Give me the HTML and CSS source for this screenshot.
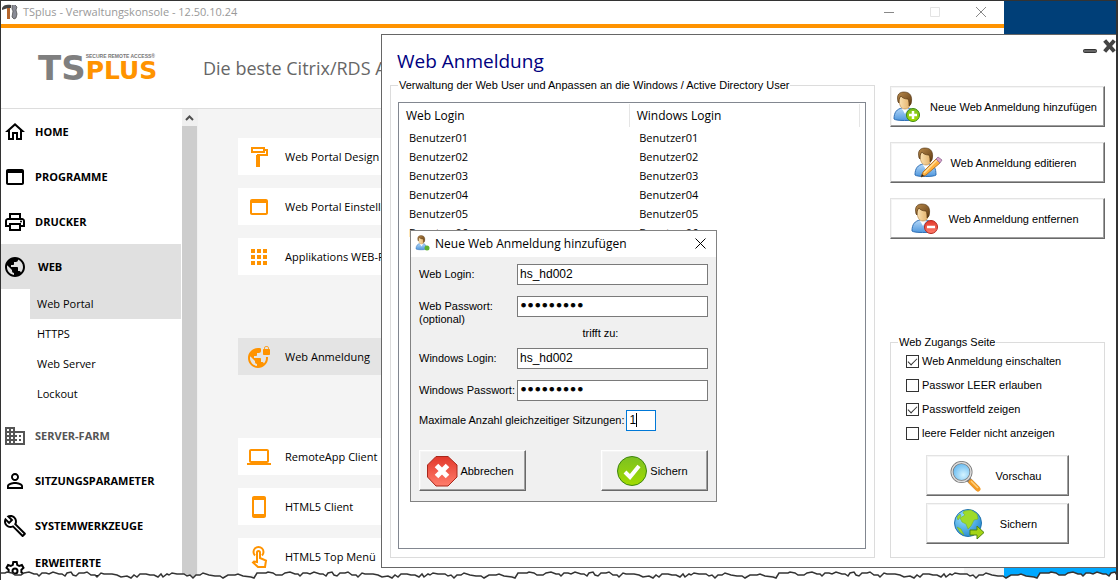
FILE: index.html
```html
<!DOCTYPE html>
<html lang="de">
<head>
    <meta charset="UTF-8">
    <meta name="viewport" content="width=device-width, initial-scale=1.0">
    <title>TSplus - Verwaltungskonsole</title>
    <link rel="stylesheet" href="styles.css">
</head>
<body>
    <!-- shared icon parts -->
    <svg class="defs" width="0" height="0">
        <defs>
            <linearGradient id="hair" x1="0" y1="0" x2="1" y2="1">
                <stop offset="0" stop-color="#b98a4b"/>
                <stop offset="1" stop-color="#5f3a12"/>
            </linearGradient>
            <linearGradient id="face" x1="0" y1="0" x2="1" y2="0">
                <stop offset="0" stop-color="#fbe3b5"/>
                <stop offset="1" stop-color="#e0ac62"/>
            </linearGradient>
            <linearGradient id="shirt" x1="0" y1="0" x2="0" y2="1">
                <stop offset="0" stop-color="#b5d8f8"/>
                <stop offset="1" stop-color="#4f97dd"/>
            </linearGradient>
            <linearGradient id="green" x1="0" y1="0" x2="0" y2="1">
                <stop offset="0" stop-color="#7cc022"/>
                <stop offset="1" stop-color="#a2dc00"/>
            </linearGradient>
            <linearGradient id="red" x1="0" y1="0" x2="0" y2="1">
                <stop offset="0" stop-color="#e2382b"/>
                <stop offset="1" stop-color="#ff7d6c"/>
            </linearGradient>
            <radialGradient id="lens" cx="0.6" cy="0.65" r="0.7">
                <stop offset="0" stop-color="#d4f3ff"/>
                <stop offset="1" stop-color="#58b2ee"/>
            </radialGradient>
            <radialGradient id="ocean" cx="0.35" cy="0.3" r="0.8">
                <stop offset="0" stop-color="#9be2ff"/>
                <stop offset="1" stop-color="#1c84cf"/>
            </radialGradient>
            <symbol id="user" viewBox="0 0 32 32">
                <path d="M2 28c0-7 3-10 8-11h6c5 1 7 4 7 11-2 2-19 2-21 0z" fill="url(#shirt)" stroke="#2f6fb5"/>
                <path d="M9 16l4 7 4-7z" fill="#fff"/>
                <path d="M7 8c0 6 2 10 6 10s6-4 6-10l-3-4H9z" fill="url(#face)" stroke="#b07a35" stroke-width=".6"/>
                <path d="M6 11C4 3 8 1 12 1c6 0 9 4 7 12l-2 2c0-3 0-5-1-7-3 0-6-1-7-3-2 2-2 4-2 7z" fill="url(#hair)" stroke="#4b2d0c" stroke-width=".6"/>
            </symbol>
        </defs>
    </svg>

    <main class="desktop">
        <div class="window">
            <header class="titlebar">
                <svg class="app-icon" width="16" height="16" viewBox="0 0 16 16">
                    <path d="M0 4c1-3 5-4 9-3v3H6L0 6z" fill="#444"/>
                    <path d="M5 4h3v11H5z" fill="#b5652b"/>
                    <path d="M10 1v4l1 2-1 6 2 2 2-1 1-4-1-4 1-3-2-2" fill="#8a8c96" stroke="#444" stroke-width=".7"/>
                </svg>
                <h1 class="window-title">TSplus - Verwaltungskonsole - 12.50.10.24</h1>
                <div class="window-controls">
                    <button type="button" aria-label="Minimieren"><svg width="10" height="10" viewBox="0 0 10 10"><path d="M0 5.5h10"/></svg></button>
                    <button type="button" class="disabled" aria-label="Maximieren"><svg width="10" height="10" viewBox="0 0 10 10"><path d="M.5 .5h9v9h-9z"/></svg></button>
                    <button type="button" aria-label="Schließen"><svg width="10" height="10" viewBox="0 0 10 10"><path d="M0 0l10 10M10 0L0 10"/></svg></button>
                </div>
            </header>

            <div class="brand-bar">
                <div class="logo">
                    <span class="logo-ts">TS</span>
                    <div class="logo-right">
                        <span class="logo-tag">SECURE REMOTE ACCESS®</span>
                        <span class="logo-plus">PLUS</span>
                    </div>
                </div>
                <p class="slogan">Die beste Citrix/RDS Alternative</p>
            </div>

            <div class="window-body">
                <nav class="sidebar">
                    <a href="#" class="nav-item">
                        <svg viewBox="0 0 24 24"><path d="M12 5.69l5 4.5V18h-2v-6H9v6H7v-7.81l5-4.5M12 3L2 12h3v8h6v-6h2v6h6v-8h3L12 3z"/></svg>
                        HOME
                    </a>
                    <a href="#" class="nav-item">
                        <svg viewBox="0 0 24 24"><path d="M19 4H5c-1.11 0-2 .9-2 2v12c0 1.1.89 2 2 2h14c1.1 0 2-.9 2-2V6c0-1.1-.9-2-2-2zm0 14H5V8h14v10z"/></svg>
                        PROGRAMME
                    </a>
                    <a href="#" class="nav-item">
                        <svg viewBox="0 0 24 24"><path d="M19 8h-1V3H6v5H5c-1.66 0-3 1.34-3 3v6h4v4h12v-4h4v-6c0-1.66-1.34-3-3-3zM8 5h8v3H8V5zm8 12v2H8v-4h8v2zm2-2v-2H6v2H4v-4c0-.55.45-1 1-1h14c.55 0 1 .45 1 1v4h-2z"/><circle cx="18" cy="11.5" r="1"/></svg>
                        DRUCKER
                    </a>
                    <a href="#" class="nav-item active">
                        <svg viewBox="0 0 24 24"><path d="M12 2C6.48 2 2 6.48 2 12s4.48 10 10 10 10-4.48 10-10S17.52 2 12 2zm-1 17.93c-3.95-.49-7-3.85-7-7.93 0-.62.08-1.21.21-1.79L9 15v1c0 1.1.9 2 2 2v1.93zm6.9-2.54c-.26-.81-1-1.39-1.9-1.39h-1v-3c0-.55-.45-1-1-1H8v-2h2c.55 0 1-.45 1-1V7h2c1.1 0 2-.9 2-2v-.41c2.93 1.19 5 4.06 5 7.41 0 2.08-.8 3.97-2.1 5.39z"/></svg>
                        WEB
                    </a>
                    <div class="sub-nav">
                        <a href="#" class="active">Web Portal</a>
                        <a href="#">HTTPS</a>
                        <a href="#">Web Server</a>
                        <a href="#">Lockout</a>
                    </div>
                    <a href="#" class="nav-item muted">
                        <svg viewBox="0 0 24 24"><path d="M12 7V3H2v18h20V7H12zM6 19H4v-2h2v2zm0-4H4v-2h2v2zm0-4H4V9h2v2zm0-4H4V5h2v2zm4 12H8v-2h2v2zm0-4H8v-2h2v2zm0-4H8V9h2v2zm0-4H8V5h2v2zm10 12h-8v-2h2v-2h-2v-2h2v-2h-2V9h8v10zm-2-8h-2v2h2v-2zm0 4h-2v2h2v-2z"/></svg>
                        SERVER-FARM
                    </a>
                    <a href="#" class="nav-item">
                        <svg viewBox="0 0 24 24"><path d="M12 5.9c1.16 0 2.1.94 2.1 2.1s-.94 2.1-2.1 2.1S9.9 9.16 9.9 8s.94-2.1 2.1-2.1m0 9c2.97 0 6.1 1.46 6.1 2.1v1.1H5.9V17c0-.64 3.13-2.1 6.1-2.1M12 4C9.79 4 8 5.79 8 8s1.79 4 4 4 4-1.79 4-4-1.79-4-4-4zm0 9c-2.67 0-8 1.34-8 4v3h16v-3c0-2.66-5.33-4-8-4z"/></svg>
                        SITZUNGSPARAMETER
                    </a>
                    <a href="#" class="nav-item">
                        <svg viewBox="0 0 24 24"><path d="M22.61 18.99l-9.08-9.08c.93-2.34.45-5.1-1.44-7C9.79.61 6.21.4 3.66 2.26L7.5 6.11 6.08 7.52 2.25 3.69C.39 6.23.6 9.82 2.9 12.11c1.86 1.86 4.57 2.35 6.89 1.48l9.11 9.11c.39.39 1.02.39 1.41 0l2.3-2.3c.4-.38.4-1.01 0-1.41zm-3 1.6l-9.46-9.46c-.61.45-1.29.72-2 .82-1.36.2-2.79-.21-3.83-1.25C3.37 9.76 2.93 8.5 3 7.26l3.09 3.09 4.24-4.24-3.09-3.09c1.24-.07 2.49.37 3.44 1.31 1.08 1.08 1.49 2.57 1.24 3.96-.12.71-.42 1.37-.88 1.96l9.45 9.45-.88.89z"/></svg>
                        SYSTEMWERKZEUGE
                    </a>
                    <a href="#" class="nav-item">
                        <svg viewBox="0 0 24 24"><path class="line" d="M10.300 3h3.400l.5 2.800 2 1.200 2.700-1 1.600 2.900-2.100 1.900v2.400l2.100 1.900-1.600 2.900-2.700-1-2 1.200-.5 2.800h-3.400l-.5-2.800-2-1.200-2.700 1-1.600-2.900 2.100-1.900v-2.400L3.500 8.900 5.100 6l2.700 1 2-1.200z"/><circle class="line" cx="12" cy="12" r="2.500"/></svg>
                        ERWEITERTE<br>FUNKTIONEN
                    </a>
                </nav>

                <div class="scrollbar">
                    <div class="scroll-up"><svg width="9" height="6" viewBox="0 0 9 6"><path d="M1 5l3.500-3.500L8 5"/></svg></div>
                    <div class="scroll-thumb"></div>
                </div>

                <section class="tiles">
                    <div class="tile-group">
                        <a href="#" class="tile">
                            <svg viewBox="0 0 24 24"><path class="line" d="M5 3h12v4H5zM18 5h2v5h-9v3"/><path d="M9 10h4v12H9z"/></svg>
                            Web Portal Design
                        </a>
                        <a href="#" class="tile">
                            <svg viewBox="0 0 24 24"><path d="M19 4H5c-1.110 0-2 .9-2 2v12c0 1.100.890 2 2 2h14c1.100 0 2-.9 2-2V6c0-1.100-.9-2-2-2zm0 14H5V8h14v10z"/></svg>
                            Web Portal Einstellungen
                        </a>
                        <a href="#" class="tile">
                            <svg viewBox="0 0 24 24"><path d="M4 4h4v4H4zM10 4h4v4h-4zM16 4h4v4h-4zM4 10h4v4H4zM10 10h4v4h-4zM16 10h4v4h-4zM4 16h4v4H4zM10 16h4v4h-4zM16 16h4v4h-4z"/></svg>
                            Applikations WEB-Portal
                        </a>
                    </div>
                    <div class="tile-group">
                        <a href="#" class="tile active">
                            <svg viewBox="0 0 24 24"><path d="M22 4v-.5C22 2.120 20.880 1 19.500 1S17 2.120 17 3.500V4c-.55 0-1 .45-1 1v4c0 .55.45 1 1 1h5c.55 0 1-.45 1-1V5c0-.55-.45-1-1-1zm-.8 0h-3.400v-.5c0-.94.76-1.700 1.700-1.700s1.700.76 1.700 1.700V4zm-2.280 8c.04.33.08.66.08 1 0 2.080-.8 3.970-2.100 5.390-.26-.81-1-1.390-1.900-1.390h-1v-3c0-.55-.45-1-1-1H7v-2h2c.55 0 1-.45 1-1V8h2c1.100 0 2-.9 2-2V3.460c-.95-.3-1.950-.46-3-.46C5.480 3 1 7.480 1 13s4.480 10 10 10 10-4.480 10-10c0-.34-.02-.67-.05-1h-2.030zM10 20.930c-3.950-.49-7-3.850-7-7.930 0-.62.08-1.210.21-1.790L8 16v1c0 1.100.9 2 2 2v1.930z"/></svg>
                            Web Anmeldung
                        </a>
                    </div>
                    <div class="tile-group">
                        <a href="#" class="tile">
                            <svg viewBox="0 0 24 24"><path d="M20 18c1.100 0 2-.9 2-2V6c0-1.100-.9-2-2-2H4c-1.100 0-2 .9-2 2v10c0 1.100.9 2 2 2H0v2h24v-2h-4zM4 6h16v10H4V6z"/></svg>
                            RemoteApp Client
                        </a>
                        <a href="#" class="tile">
                            <svg viewBox="0 0 24 24"><path d="M17 1H7c-1.100 0-2 .9-2 2v18c0 1.100.9 2 2 2h10c1.100 0 2-.9 2-2V3c0-1.100-.9-2-2-2zm0 18H7V5h10v14z"/></svg>
                            HTML5 Client
                        </a>
                        <a href="#" class="tile">
                            <svg viewBox="0 0 24 24"><path class="line" d="M8 10.500a5 5 0 1 1 7 0M10 17V7.500a1.500 1.500 0 0 1 3 0V13l6 2.500-1 6.500h-7l-5-4.500 1-1z"/></svg>
                            HTML5 Top Menü
                        </a>
                    </div>
                </section>
            </div>
        </div>

        <section class="dialog">
            <header class="dialog-header">
                <h2>Web Anmeldung</h2>
                <div class="dialog-controls">
                    <button type="button" aria-label="Minimieren"><svg width="14" height="14" viewBox="0 0 14 14"><rect x="0.500" y="10.500" width="13" height="3" rx="1" fill="#666" stroke="#333"/></svg></button>
                    <button type="button" aria-label="Schließen"><svg width="14" height="14" viewBox="0 0 14 14"><path d="M4 3l7 8M11 3l-7 8" stroke="#444" stroke-width="4" stroke-linecap="square"/></svg></button>
                </div>
            </header>

            <div class="dialog-body">
                <fieldset class="group users">
                    <legend>Verwaltung der Web User und Anpassen an die Windows / Active Directory User</legend>
                    <div class="list">
                        <table>
                            <thead>
                                <tr><th>Web Login</th><th>Windows Login</th></tr>
                            </thead>
                            <tbody>
                                <tr><td>Benutzer01</td><td>Benutzer01</td></tr>
                                <tr><td>Benutzer02</td><td>Benutzer02</td></tr>
                                <tr><td>Benutzer03</td><td>Benutzer03</td></tr>
                                <tr><td>Benutzer04</td><td>Benutzer04</td></tr>
                                <tr><td>Benutzer05</td><td>Benutzer05</td></tr>
                                <tr><td>Benutzer06</td><td>Benutzer06</td></tr>
                            </tbody>
                        </table>
                    </div>
                </fieldset>

                <div class="side">
                    <div class="actions">
                        <button type="button" class="btn">
                            <svg viewBox="0 0 32 32"><use href="#user"/><circle cx="21" cy="24" r="6.500" fill="url(#green)" stroke="#3f8a10"/><path d="M21 20v8M17 24h8" stroke="#fff" stroke-width="2.500"/></svg>
                            Neue Web Anmeldung hinzufügen
                        </button>
                        <button type="button" class="btn">
                            <svg viewBox="0 0 32 32"><use href="#user"/><path d="M8 30l2-5L23 12l4 4-14 12z" fill="#ffb13d" stroke="#a8641a" stroke-width=".8"/><path d="M11 26L24 13" stroke="#ffe0a0" stroke-width="1.500"/><path d="M23 12l2-2 4 3-2 3z" fill="#d9a0c8" stroke="#8f6c95" stroke-width=".8"/><path d="M8 30l1-3 2 2z" fill="#222"/></svg>
                            Web Anmeldung editieren
                        </button>
                        <button type="button" class="btn">
                            <svg viewBox="0 0 32 32"><use href="#user"/><circle cx="21" cy="24" r="6.500" fill="url(#red)" stroke="#b3261c"/><path d="M17 24h8" stroke="#fff" stroke-width="2.500"/></svg>
                            Web Anmeldung entfernen
                        </button>
                    </div>

                    <fieldset class="group access">
                        <legend>Web Zugangs Seite</legend>
                        <label class="check"><input type="checkbox" checked>Web Anmeldung einschalten</label>
                        <label class="check"><input type="checkbox">Passwor LEER erlauben</label>
                        <label class="check"><input type="checkbox" checked>Passwortfeld zeigen</label>
                        <label class="check"><input type="checkbox">leere Felder nicht anzeigen</label>
                        <div class="access-buttons">
                            <button type="button" class="btn wide">
                                <svg viewBox="0 0 32 32"><path d="M19 19l10 10" stroke="#777" stroke-width="5"/><path d="M22 22l7 7" stroke="#f49b25" stroke-width="5" stroke-linecap="round"/><path d="M22 21l7 7" stroke="#ffd27c" stroke-width="1.500"/><circle cx="12.500" cy="12" r="9.500" fill="url(#lens)" stroke="#777" stroke-width="3"/><circle cx="12.500" cy="12" r="9.500" fill="none" stroke="#dcdcdc" stroke-width="1.500"/></svg>
                                Vorschau
                            </button>
                            <button type="button" class="btn wide">
                                <svg viewBox="0 0 32 32"><circle cx="15" cy="15" r="13.500" fill="url(#ocean)" stroke="#2173ae"/><path d="M11 3l7-1 6 4 1 5-4 1-3 6-3 3-2-5-4-2-2-4 5-3-2-2zM4 19l4 2 3 6-4-3zM4 9l3-3 1 2-3 4z" fill="#9edb2b" stroke="#6fae1c" stroke-width=".5"/><path d="M17 22h7v-4l7 6.500-7 6.500v-4h-7z" fill="#a4d414" stroke="#4f8310"/></svg>
                                Sichern
                            </button>
                        </div>
                    </fieldset>
                </div>
            </div>
        </section>

        <section class="modal">
            <header class="modal-header">
                <svg width="16" height="16" viewBox="0 0 32 32"><use href="#user"/><circle cx="24" cy="26" r="5" fill="#5cb030"/></svg>
                <h3>Neue Web Anmeldung hinzufügen</h3>
                <button type="button" aria-label="Schließen"><svg width="11" height="11" viewBox="0 0 11 11"><path d="M.5 .5l10 10M10.500 .5l-10 10"/></svg></button>
            </header>
            <form class="modal-form">
                <div class="row">
                    <label for="web-login">Web Login:</label>
                    <input type="text" id="web-login" value="hs_hd002">
                </div>
                <div class="row row-optional">
                    <label for="web-password">Web Passwort:<br>(optional)</label>
                    <input type="password" id="web-password" value="123456789">
                </div>
                <p class="maps-to">trifft zu:</p>
                <div class="row">
                    <label for="win-login">Windows Login:</label>
                    <input type="text" id="win-login" value="hs_hd002">
                </div>
                <div class="row">
                    <label for="win-password">Windows Passwort:</label>
                    <input type="password" id="win-password" value="123456789">
                </div>
                <div class="row row-sessions">
                    <label for="sessions">Maximale Anzahl gleichzeitiger Sitzungen:</label>
                    <input type="text" id="sessions" value="1">
                </div>
                <div class="modal-buttons">
                    <button type="button" class="btn compact">
                        <svg viewBox="0 0 32 32"><path d="M10 1.500h12L31 10v12l-9 9H10l-8.500-9V10z" fill="url(#red)" stroke="#a8281c"/><path d="M10.500 10.500l11 11M21.500 10.500l-11 11" stroke="#fff" stroke-width="5"/></svg>
                        Abbrechen
                    </button>
                    <button type="button" class="btn compact">
                        <svg viewBox="0 0 32 32"><circle cx="16" cy="16" r="14.500" fill="url(#green)" stroke="#3e8510"/><path d="M9 17l5 5 9-11" fill="none" stroke="#fff" stroke-width="4"/></svg>
                        Sichern
                    </button>
                </div>
            </form>
        </section>

        <!-- torn bottom edge -->
        <svg class="torn-edge" width="100%" height="9">
            <defs>
                <pattern id="tear" width="261" height="9" patternUnits="userSpaceOnUse">
                    <path d="M0 2h4l2-1 5 1 3 2h6l3-2 5-1 5 2h3l2 2 3-3h4l3 1 4-2 6 2h3l3 2 2-3 4-1 2 3 3 1 3-3h5l3-1 4 3h4l2 2 4-4 3 1h8l5 1 4 2 6-1 4 2 3-3 3 2 3-3h6l4 1h4l4 2 3-3 2 3 4-3 2 1 3-2 5 1h7l3 2 3-1 3 3 3-3h4l3-2 6 2 6 1h5l3 2 5-3h7l3-1 5 2 8 1 3 1 3-5h5v7H0z" fill="#fff"/>
                    <path d="M0 2h4l2-1 5 1 3 2h6l3-2 5-1 5 2h3l2 2 3-3h4l3 1 4-2 6 2h3l3 2 2-3 4-1 2 3 3 1 3-3h5l3-1 4 3h4l2 2 4-4 3 1h8l5 1 4 2 6-1 4 2 3-3 3 2 3-3h6l4 1h4l4 2 3-3 2 3 4-3 2 1 3-2 5 1h7l3 2 3-1 3 3 3-3h4l3-2 6 2 6 1h5l3 2 5-3h7l3-1 5 2 8 1 3 1 3-5h5" fill="none" stroke="#333" stroke-width="1.500"/>
                </pattern>
            </defs>
            <rect width="100%" height="9" fill="url(#tear)"/>
        </svg>
    </main>
</body>
</html>
```
FILE: styles.css
```css
* {
    box-sizing: border-box;
}

body {
    margin: 0;
    font-family: 'Open Sans', 'Noto Sans', sans-serif;
    font-size: 11px;
    color: #000;
    background: #fff;
}

h1, h2, h3, p {
    margin: 0;
    font-weight: normal;
}

a {
    color: inherit;
    text-decoration: none;
}

button {
    font-family: 'Liberation Sans', Arial, sans-serif;
    font-size: 11px;
    color: #000;
    padding: 0;
    cursor: pointer;
}

.defs {
    position: absolute;
}

.desktop {
    position: relative;
    height: 100vh;
    overflow: hidden;
    background: linear-gradient(#003f78 50%, #00a8ff 50%);
    border: 1px solid #333;
    border-right-width: 2px;
    border-bottom: none;
}

/* Main window */
.window {
    display: flex;
    flex-direction: column;
    height: 100%;
    margin-right: 112px;
    background: #fff;
    overflow: hidden;
}

.titlebar {
    display: flex;
    align-items: center;
    flex-shrink: 0;
    height: 23px;
    padding: 0 0 2px 1px;
}

.window-title {
    flex: 1;
    margin-left: 5px;
    font-size: 11px;
    line-height: 20px;
    color: #999;
}

.window-controls {
    display: flex;
}

.window-controls button {
    display: flex;
    align-items: center;
    justify-content: center;
    width: 46px;
    height: 20px;
    border: none;
    background: none;
}

.window-controls path {
    fill: none;
    stroke: #888;
}

.window-controls .disabled path {
    stroke: #e3e3e3;
}

.brand-bar {
    display: flex;
    align-items: center;
    flex-shrink: 0;
    height: 85px;
    padding-left: 37px;
    border-top: 4px solid #ff9300;
    border-bottom: 1px solid #ddd;
}

.logo {
    display: flex;
    align-items: flex-end;
    width: 165px;
    font-family: 'DejaVu Sans', sans-serif;
    font-weight: bold;
}

.logo-ts {
    font-size: 34px;
    line-height: 30px;
    color: #7f7f7f;
}

.logo-right {
    display: flex;
    flex-direction: column;
}

.logo-tag {
    font-family: 'Liberation Sans', Arial, sans-serif;
    font-size: 5px;
    line-height: 6px;
    color: #777;
}

.logo-plus {
    font-size: 25px;
    line-height: 24px;
    color: #ff9300;
}

.slogan {
    font-size: 18px;
    color: #666;
    white-space: nowrap;
}

.window-body {
    display: flex;
    flex: 1;
    min-height: 0;
}

.sidebar {
    width: 180px;
    flex-shrink: 0;
    overflow: hidden;
}

.nav-item {
    display: flex;
    align-items: center;
    height: 45px;
    padding-left: 2px;
    font-weight: bold;
    line-height: 16px;
}

.nav-item svg {
    flex-shrink: 0;
    width: 24px;
    height: 24px;
    margin-right: 8px;
}

.nav-item.active {
    background: #e0e0e0;
}

.nav-item.active svg {
    margin-right: 11px;
}

.nav-item.muted {
    color: #555;
    fill: #555;
}

.sub-nav {
    margin: 0 0 4px 29px;
}

.sub-nav a {
    display: block;
    padding-left: 7px;
    line-height: 30px;
}

.sub-nav .active {
    background: #e0e0e0;
}

.line {
    fill: none;
    stroke: #000;
    stroke-width: 2;
}

.scrollbar {
    display: flex;
    flex-direction: column;
    width: 16px;
    margin-left: 1px;
    flex-shrink: 0;
    background: #f0f0f0;
}

.scroll-up {
    display: flex;
    align-items: center;
    justify-content: center;
    height: 17px;
    margin-right: 1px;
}

.scroll-up path {
    fill: none;
    stroke: #505050;
    stroke-width: 2;
}

.scroll-thumb {
    flex: 1;
    margin-right: 1px;
    background: #cdcdcd;
}

.tiles {
    display: flex;
    flex-direction: column;
    flex: 1;
    gap: 63px;
    padding: 29px 40px 0;
    background: #f4f4f4;
}

.tile-group {
    display: flex;
    flex-direction: column;
    gap: 13px;
}

.tile {
    display: flex;
    align-items: center;
    height: 37px;
    padding-left: 9px;
    background: #fff;
    white-space: nowrap;
}

.tile svg {
    width: 24px;
    height: 24px;
    margin-right: 14px;
    fill: #ff9300;
}

.tile .line {
    fill: none;
    stroke: #ff9300;
}

.tile.active {
    background: #e4e4e4;
}

/* Dialog "Web Anmeldung" */
.dialog {
    position: absolute;
    top: 33px;
    right: 0;
    bottom: 12px;
    left: 380px;
    display: flex;
    flex-direction: column;
    background: #fff;
    border: 1px solid #666;
    border-right: none;
    font-family: 'Liberation Sans', Arial, sans-serif;
    font-size: 11px;
}

.dialog-header {
    display: flex;
    justify-content: space-between;
    height: 43px;
    padding-left: 15px;
}

.dialog-header h2 {
    padding-top: 11px;
    font-family: 'Open Sans', 'Noto Sans', sans-serif;
    font-size: 19px;
    line-height: 30px;
    color: #00007f;
}

.dialog-controls {
    display: flex;
    align-items: flex-start;
    gap: 5px;
    padding-top: 4px;
}

.dialog-controls button {
    display: flex;
    border: none;
    background: none;
}

.dialog-body {
    display: grid;
    grid-template-columns: 1fr 215px;
    gap: 15px;
    flex: 1;
    padding: 0 11px 9px 8px;
}

.group {
    display: flex;
    flex-direction: column;
    min-width: 0;
    margin: 0;
    border: 1px solid #dcdcdc;
}

.group legend {
    padding: 0 1px;
    line-height: 14px;
    white-space: nowrap;
}

.users {
    padding: 10px 8px 8px 7px;
}

.list {
    height: 100%;
    padding: 1px 5px 0 0;
    border: 1px solid #828790;
}

.list table {
    width: 100%;
    border-collapse: collapse;
    table-layout: fixed;
    font-family: 'Open Sans', 'Noto Sans', sans-serif;
    font-size: 11px;
}

.list th {
    height: 23px;
    padding: 0 7px;
    border-right: 1px solid #e5e5e5;
    font-size: 12px;
    font-weight: normal;
    text-align: left;
}

.list td {
    height: 19px;
    padding: 0 10px;
    line-height: 19px;
}

.list tbody::before {
    content: '';
    display: block;
    height: 1px;
}

.side {
    display: flex;
    flex-direction: column;
    justify-content: space-between;
    padding-top: 8px;
}

.actions {
    display: flex;
    flex-direction: column;
    gap: 15px;
}

/* Raised classic button */
.btn {
    display: flex;
    align-items: center;
    justify-content: center;
    gap: 6px;
    height: 41px;
    padding-right: 6px;
    background: transparent;
    border: 1px solid #e3e3e3;
    border-right-color: #696969;
    border-bottom-color: #696969;
    box-shadow: inset -1px -1px #a0a0a0, inset 1px 1px #f5f5f5;
    white-space: nowrap;
}

.btn svg {
    flex-shrink: 0;
    width: 32px;
    height: 32px;
}

.btn.wide {
    gap: 15px;
    padding-right: 5px;
}

.btn.compact {
    gap: 2px;
    width: 107px;
    padding-right: 5px;
    border-color: #fff #696969 #696969 #fff;
}

.access {
    padding: 0 35px 13px 7px;
}

.check {
    display: flex;
    align-items: center;
    height: 24px;
    margin-left: 8px;
    white-space: nowrap;
}

.check input {
    appearance: none;
    width: 13px;
    height: 13px;
    margin: 0 3px 0 0;
    flex-shrink: 0;
    border: 1px solid #333;
    background: #fff;
}

.check input:checked::before {
    content: '';
    display: block;
    width: 8px;
    height: 4px;
    margin: 2px 0 0 1px;
    border: solid #333;
    border-width: 0 0 1px 1px;
    transform: rotate(-45deg);
}

.access-buttons {
    display: flex;
    flex-direction: column;
    gap: 7px;
    margin: 10px 0 0 28px;
}

/* Small window for adding a login */
.modal {
    position: absolute;
    top: 229px;
    left: 409px;
    width: 307px;
    background: #f0f0f0;
    border: 1px solid #828282;
    font-family: 'Liberation Sans', Arial, sans-serif;
    font-size: 11px;
}

.modal-header {
    display: flex;
    align-items: center;
    height: 26px;
    padding: 0 10px 2px 4px;
    background: #fff;
}

.modal-header h3 {
    flex: 1;
    margin-left: 4px;
    font-family: 'Open Sans', 'Noto Sans', sans-serif;
    font-size: 12px;
}

.modal-header button {
    display: flex;
    border: none;
    background: none;
}

.modal-header button path {
    stroke: #000;
}

.modal-form {
    padding: 7px 8px 10px;
}

.row {
    display: flex;
    align-items: flex-start;
    justify-content: space-between;
    margin-bottom: 11px;
}

.row label {
    padding-top: 4px;
    line-height: 13px;
    white-space: nowrap;
}

.row input {
    width: 191px;
    height: 21px;
    padding: 0 2px 2px;
    border: 1px solid #7a7a7a;
    background: #fff;
    font-family: 'Liberation Sans', Arial, sans-serif;
    font-size: 12px;
    outline: none;
}

.row input[type="password"] {
    font-family: 'DejaVu Sans', sans-serif;
    -webkit-text-stroke: 1px #000;
}

.row-optional {
    margin-bottom: 0;
}

.maps-to {
    margin-bottom: 8px;
    padding-left: 74px;
    line-height: 14px;
    text-align: center;
}

.row-sessions {
    justify-content: flex-start;
    gap: 2px;
    margin: -2px 0 19px;
}

/* the active field, with its text cursor */
.row-sessions input {
    width: 30px;
    border-color: #0078d7;
    background: #fff linear-gradient(#000, #000) 9px 2px / 1px 14px no-repeat;
    caret-color: transparent;
}

.modal-buttons {
    display: flex;
    justify-content: space-between;
}

.torn-edge {
    position: absolute;
    bottom: 0;
    left: 0;
}
```
